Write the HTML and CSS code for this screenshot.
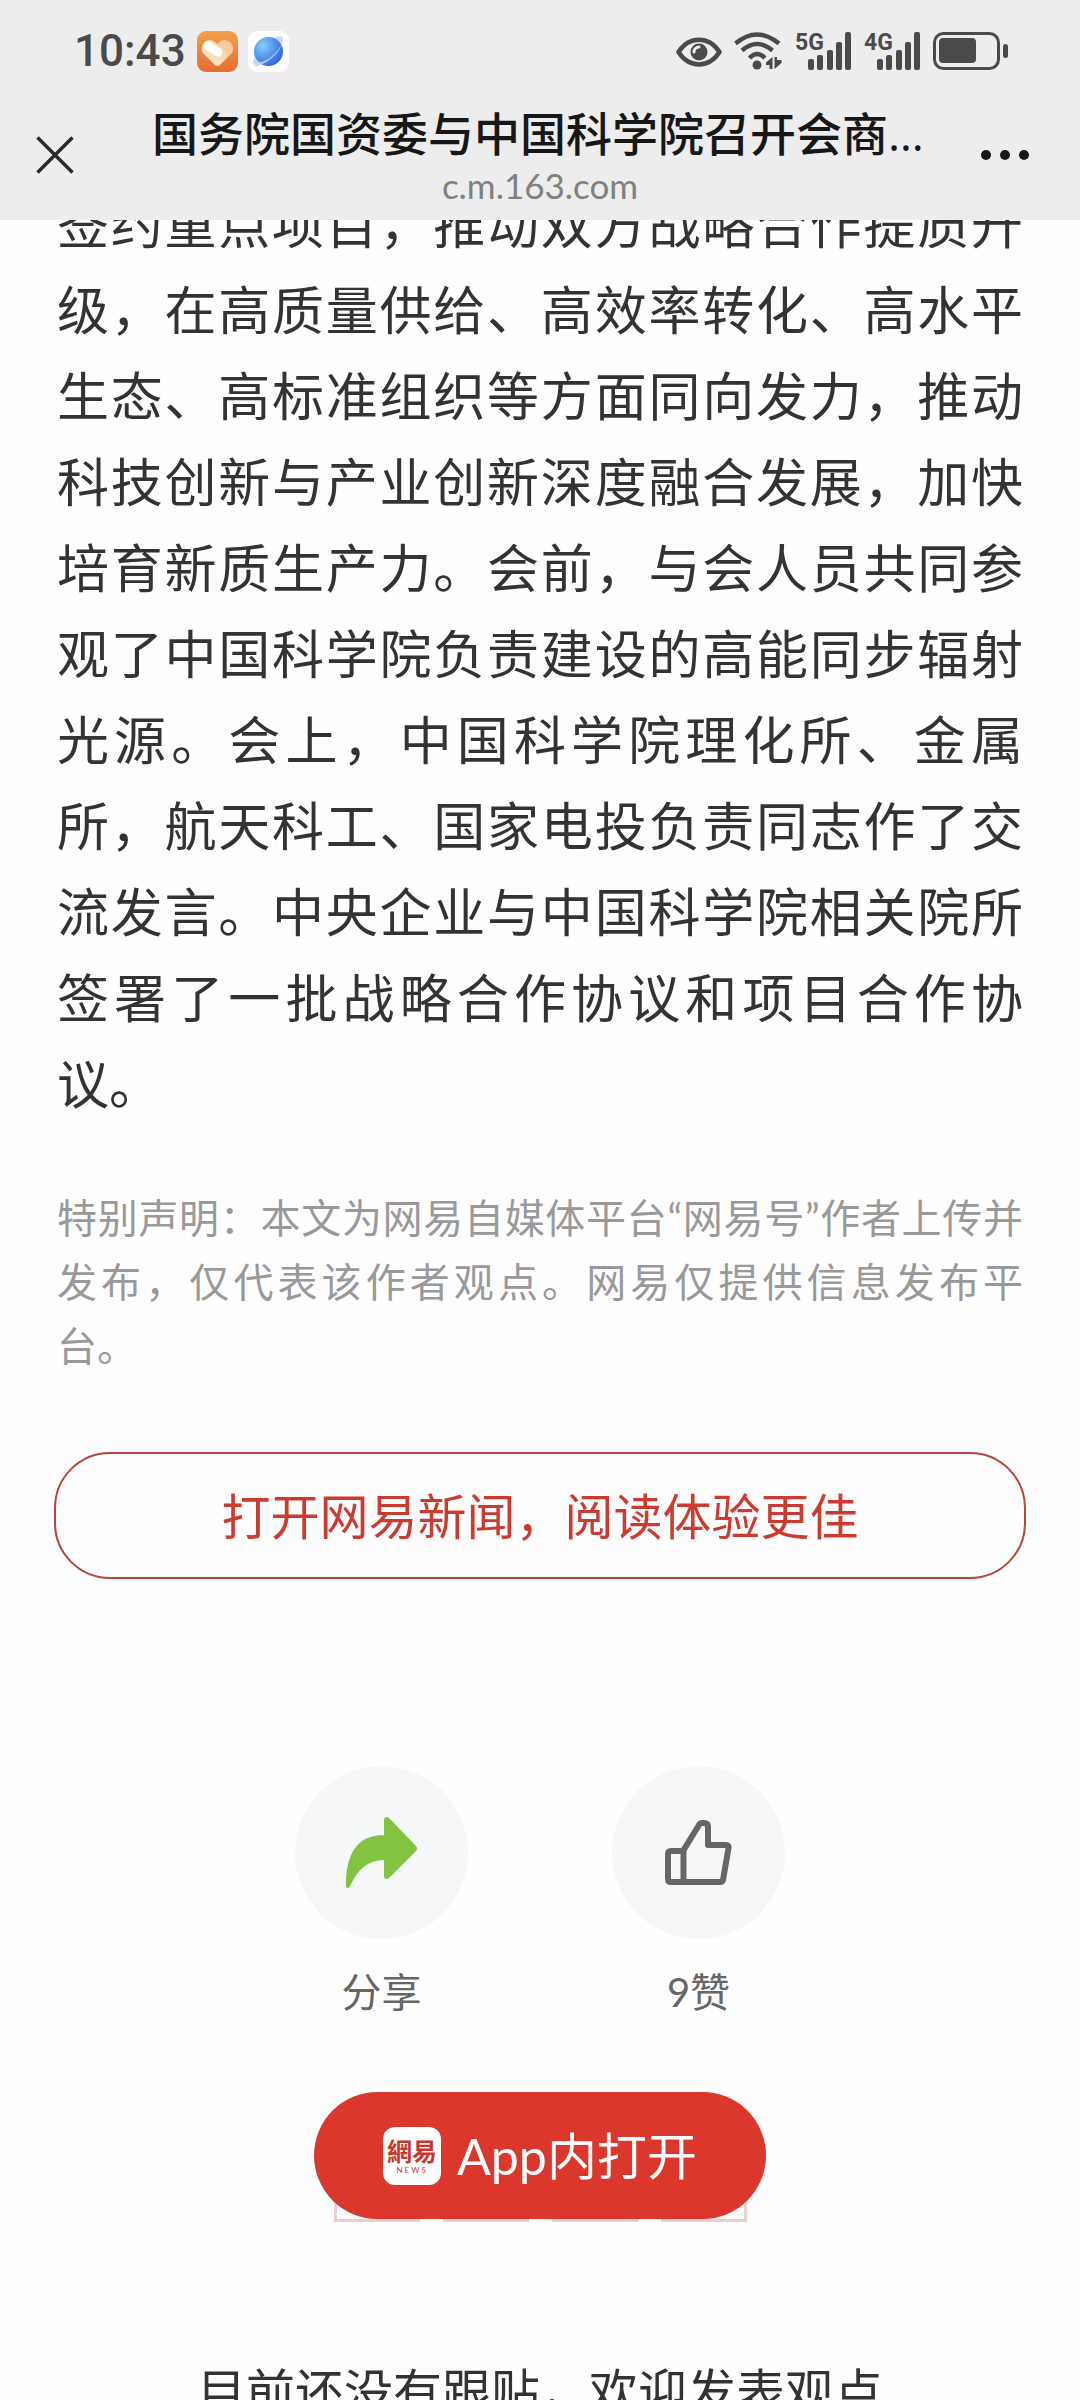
FILE: index.html
```html
<!DOCTYPE html>
<html lang="zh-CN">
<head>
    <meta charset="UTF-8">
    <meta name="viewport" content="width=device-width, initial-scale=1.0">
    <title>国务院国资委与中国科学院召开会商</title>
    <link rel="stylesheet" href="styles.css">
</head>
<body>

    <header class="header">
        <div class="status-bar">
            <span class="time">10:43</span>
            <div class="status-apps">
                <svg width="41" height="41" viewBox="0 0 41 41" aria-hidden="true">
                    <defs>
                        <linearGradient id="orange" x1="0" y1="0" x2="0" y2="1">
                            <stop offset="0" stop-color="#f2a04a"/>
                            <stop offset="1" stop-color="#e66c33"/>
                        </linearGradient>
                        <linearGradient id="heart" x1="1" y1="0" x2="0" y2="1">
                            <stop offset="0" stop-color="#f8bf85"/>
                            <stop offset="1" stop-color="#fff0e4"/>
                        </linearGradient>
                    </defs>
                    <rect width="41" height="41" rx="9" fill="url(#orange)"/>
                    <path d="M20.500 13 C24 8 30 8 33.500 11.500 C37 15 37 20 34 23 L23 34 Q20.500 36 18 34 L7 23 C4 20 4 15 7 11.500 C11 8 16 8 20.500 13Z" fill="url(#heart)"/>
                    <path d="M11 14.500 L21 21" stroke="#fff" stroke-width="9" stroke-linecap="round"/>
                </svg>
                <svg width="41" height="41" viewBox="0 0 41 41" aria-hidden="true">
                    <defs>
                        <radialGradient id="planet" cx="0.3" cy="0.3" r="0.8">
                            <stop offset="0" stop-color="#86cdf6"/>
                            <stop offset="0.5" stop-color="#5896ec"/>
                            <stop offset="1" stop-color="#2f62dc"/>
                        </radialGradient>
                    </defs>
                    <rect width="41" height="41" rx="9" fill="#fff"/>
                    <path d="M26 7 C32 4 36 5 35 9 C34 14 31 19 27 23Z" fill="#cfd6f6"/>
                    <circle cx="20.500" cy="20.500" r="14.500" fill="url(#planet)"/>
                    <path d="M7 24 C4 31 5 36 9 35 C19 33 32 22 34 12 C29 23 19 30 12 31 C8 31 7 28 7 24Z" fill="#b5d0f8" opacity="0.85"/>
                </svg>
            </div>
            <div class="status-icons">
                <svg class="eye" width="46" height="38" viewBox="0 0 46 38" aria-hidden="true">
                    <path d="M2.500 20 C13 3.500 33 3.500 43.500 20 C33 36.500 13 36.500 2.500 20Z" fill="none" stroke="#4a4a4a" stroke-width="4.500" stroke-linejoin="round"/>
                    <circle cx="23" cy="20" r="8.500" fill="#4a4a4a"/>
                    <path d="M18 20 A5 5 0 0 1 23 15" fill="none" stroke="#ededed" stroke-width="3" stroke-linecap="round"/>
                </svg>
                <svg class="wifi" width="49" height="38" viewBox="0 0 49 38" aria-hidden="true">
                    <g fill="none" stroke="#4a4a4a" stroke-width="4.500">
                        <path d="M1.500 11.500 Q23 -6.500 45 11.500"/>
                        <path d="M8 18.500 Q23 5.500 38.500 18.500"/>
                        <path d="M15.500 26 Q23 18 31 26"/>
                    </g>
                    <circle cx="23" cy="33" r="4.500" fill="#4a4a4a"/>
                    <path d="M38.500 25 V37 H35.500 V33 H32 V30.500Z M40.500 25 H43 V28 H47.500 V31 L40.500 37Z" fill="#4a4a4a"/>
                </svg>
                <svg class="signal" width="57" height="38" viewBox="0 0 57 38" role="img" aria-label="5G">
                    <text class="signal-text" x="0" y="18">5G</text>
                    <g fill="#4a4a4a">
                        <rect x="13" y="27" width="6" height="11" rx="2"/>
                        <rect x="22" y="23" width="6" height="15" rx="2"/>
                        <rect x="32" y="18" width="6" height="20" rx="2"/>
                        <rect x="41" y="10" width="6" height="28" rx="2"/>
                        <rect x="50" y="0" width="6" height="38" rx="2"/>
                    </g>
                </svg>
                <svg class="signal" width="57" height="38" viewBox="0 0 57 38" role="img" aria-label="4G">
                    <text class="signal-text" x="0" y="18">4G</text>
                    <g fill="#4a4a4a">
                        <rect x="13" y="27" width="6" height="11" rx="2"/>
                        <rect x="22" y="23" width="6" height="15" rx="2"/>
                        <rect x="32" y="18" width="6" height="20" rx="2"/>
                        <rect x="41" y="10" width="6" height="28" rx="2"/>
                        <rect x="50" y="0" width="6" height="38" rx="2"/>
                    </g>
                </svg>
                <svg class="battery" width="76" height="38" viewBox="0 0 76 38" aria-hidden="true">
                    <rect x="1.500" y="1.500" width="64" height="35" rx="9" fill="none" stroke="#4a4a4a" stroke-width="3"/>
                    <rect x="6" y="6" width="37" height="25" rx="4" fill="#4a4a4a"/>
                    <rect x="70" y="12" width="5" height="14" rx="2.500" fill="#4a4a4a"/>
                </svg>
            </div>
        </div>

        <div class="nav-bar">
            <button class="nav-button" type="button" aria-label="关闭">
                <svg width="38" height="38" viewBox="0 0 38 38" aria-hidden="true">
                    <path d="M1.500 1.500 L36.500 36.500 M36.500 1.500 L1.500 36.500" stroke="#2a2a2a" stroke-width="3.500"/>
                </svg>
            </button>
            <div class="nav-title">
                <h1>国务院国资委与中国科学院召开会商…</h1>
                <p>c.m.163.com</p>
            </div>
            <button class="nav-button more" type="button" aria-label="更多">
                <svg width="48" height="10" viewBox="0 0 48 10" aria-hidden="true">
                    <circle cx="5" cy="5" r="5" fill="#171717"/>
                    <circle cx="24" cy="5" r="5" fill="#171717"/>
                    <circle cx="43" cy="5" r="5" fill="#171717"/>
                </svg>
            </button>
        </div>
    </header>

    <main class="page">
        <article class="article">
            <p class="content">签约重点项目，推动双方战略合作提质升级，在高质量供给、高效率转化、高水平生态、高标准组织等方面同向发力，推动科技创新与产业创新深度融合发展，加快培育新质生产力。会前，与会人员共同参观了中国科学院负责建设的高能同步辐射光源。会上，中国科学院理化所、金属所，航天科工、国家电投负责同志作了交流发言。中央企业与中国科学院相关院所签署了一批战略合作协议和项目合作协议。</p>
            <p class="statement">
                <span class="full-line">特别声明：本文为网易自媒体平台“网易号”作者上传并</span>
                <span class="full-line">发布，仅代表该作者观点。网易仅提供信息发布平</span>
                台。
            </p>
        </article>

        <button class="open-news" type="button">打开网易新闻，阅读体验更佳</button>

        <div class="actions">
            <button class="action" type="button">
                <span class="action-icon">
                    <svg width="72" height="72" viewBox="0 0 72 72" aria-hidden="true">
                        <path d="M38 19 V3 Q38 0 41 0 Q42 0 43 1 L70 29 Q72 31.500 70 34 L43 61 Q42 62 41 62 Q38 62 38 59 V43 C22 43 12 52 4 69 Q3 71 2 71 Q0 71 0 68 C0 37 11 18 38 18Z" fill="#82c341"/>
                    </svg>
                </span>
                分享
            </button>
            <button class="action" type="button">
                <span class="action-icon">
                    <svg width="67" height="66" viewBox="0 0 67 66" aria-hidden="true">
                        <g fill="none" stroke="#666" stroke-width="6" stroke-linejoin="round">
                            <path d="M18 31 L34 5 Q35 3 37 3 H39 Q43 3 43 7 V25 H61 Q64 25 63.500 28 L58 60 Q57.500 62 55 62 H6 Q3 62 3 59 V34 Q3 31 6 31Z"/>
                            <path d="M18.500 31 V62"/>
                        </g>
                    </svg>
                </span>
                9赞
            </button>
        </div>

        <div class="open-app-area">
            <div class="placeholder">
                <span></span>
                <span></span>
                <span></span>
                <span></span>
            </div>
            <button class="open-app" type="button">
                <span class="logo">
                    <span class="logo-name">網易</span>
                    <span class="logo-news">NEWS</span>
                </span>
                <span class="open-app-text">App内打开</span>
            </button>
        </div>

        <p class="empty-tip">目前还没有跟贴，欢迎发表观点</p>
    </main>

</body>
</html>
```
FILE: styles.css
```css
* {
    box-sizing: border-box;
}
body {
    margin: 0;
    height: 100vh;
    overflow: hidden;
    background-color: #fefefe;
    color: #333;
    font-family: Lato, "Noto Sans CJK SC", sans-serif;
}
h1, p {
    margin: 0;
}
button {
    padding: 0;
    border: none;
    background: none;
    color: inherit;
    font: inherit;
    cursor: pointer;
}
svg {
    display: block;
}

/* header */
.header {
    position: sticky;
    top: 0;
    z-index: 1;
    height: 220px;
    padding-top: 24px;
    background-color: #ededed;
}
.status-bar {
    display: flex;
    align-items: center;
    height: 54px;
    padding: 0 71px 0 74px;
    color: #4a4a4a;
}
.time {
    font-family: Roboto, sans-serif;
    font-size: 44px;
    font-weight: 500;
    line-height: 54px;
}
.status-apps {
    display: flex;
    gap: 10px;
    margin-left: 11px;
}
.status-icons {
    display: flex;
    gap: 12px;
    margin-left: auto;
}
.signal {
    overflow: visible;
}
.signal-text {
    fill: #4a4a4a;
    font-family: Roboto, sans-serif;
    font-size: 23px;
    font-weight: 700;
}
.nav-bar {
    display: grid;
    grid-template-columns: 152px 1fr 152px;
    align-items: center;
    padding-top: 25px;
}
.nav-button {
    display: flex;
    padding-left: 36px;
}
.more {
    justify-content: flex-end;
    padding: 0 51px 0 0;
}
.nav-title h1 {
    color: #171717;
    font-family: "Open Sans", "Noto Sans CJK SC", sans-serif;
    font-size: 46px;
    font-weight: 500;
    line-height: 60px;
    white-space: nowrap;
}
.nav-title p {
    color: #808080;
    font-size: 35px;
    line-height: 44px;
    text-align: center;
}

/* article */
.article {
    margin-top: -39px;
    padding: 0 57px;
    text-align: justify;
}
.content {
    font-size: 52px;
    line-height: 86px;
}
.statement {
    margin-top: 59px;
    color: #999;
    font-size: 40px;
    line-height: 64px;
}
.full-line {
    display: block;
    text-align-last: justify;
}
.open-news {
    display: block;
    width: calc(100% - 108px);
    height: 127px;
    margin: 74px auto 0;
    padding-bottom: 5px;
    border: 2px solid #b8453d;
    border-radius: 56px;
    color: #cb3b30;
    font-size: 49px;
}

/* share and like */
.actions {
    display: flex;
    justify-content: center;
    gap: 144px;
    margin-top: 187px;
}
.action {
    display: flex;
    flex-direction: column;
    align-items: center;
    gap: 25px;
    color: #666;
    font-size: 40px;
    line-height: 56px;
}
.action-icon {
    display: flex;
    align-items: center;
    justify-content: center;
    width: 173px;
    height: 173px;
    border-radius: 50%;
    background-color: #f5f7f9;
}

/* the button covers the empty comment boxes */
.open-app-area {
    display: grid;
    justify-items: center;
    align-items: end;
    margin-top: 72px;
}
.placeholder, .open-app {
    grid-area: 1 / 1;
}
.placeholder {
    display: flex;
    gap: 23px;
}
.placeholder span {
    width: 86px;
    height: 86px;
    border: 3px solid #ecd0d0;
}
.open-app {
    display: flex;
    align-items: center;
    gap: 16px;
    height: 127px;
    margin-bottom: 3px;
    padding: 0 69px;
    border-radius: 64px;
    background-color: #db372d;
    color: #fff;
    font-size: 50px;
}
.open-app-text {
    padding-bottom: 6px;
}
.logo {
    display: flex;
    flex-direction: column;
    align-items: center;
    justify-content: center;
    width: 58px;
    height: 58px;
    border-radius: 12px;
    background-color: #fff;
    color: #c8372e;
}
.logo-name {
    font-size: 25px;
    font-weight: 700;
    line-height: 28px;
}
.logo-news {
    font-size: 8px;
    line-height: 10px;
    letter-spacing: 2px;
}
.empty-tip {
    margin-top: 139px;
    font-size: 49px;
    line-height: 60px;
    text-align: center;
}
```
